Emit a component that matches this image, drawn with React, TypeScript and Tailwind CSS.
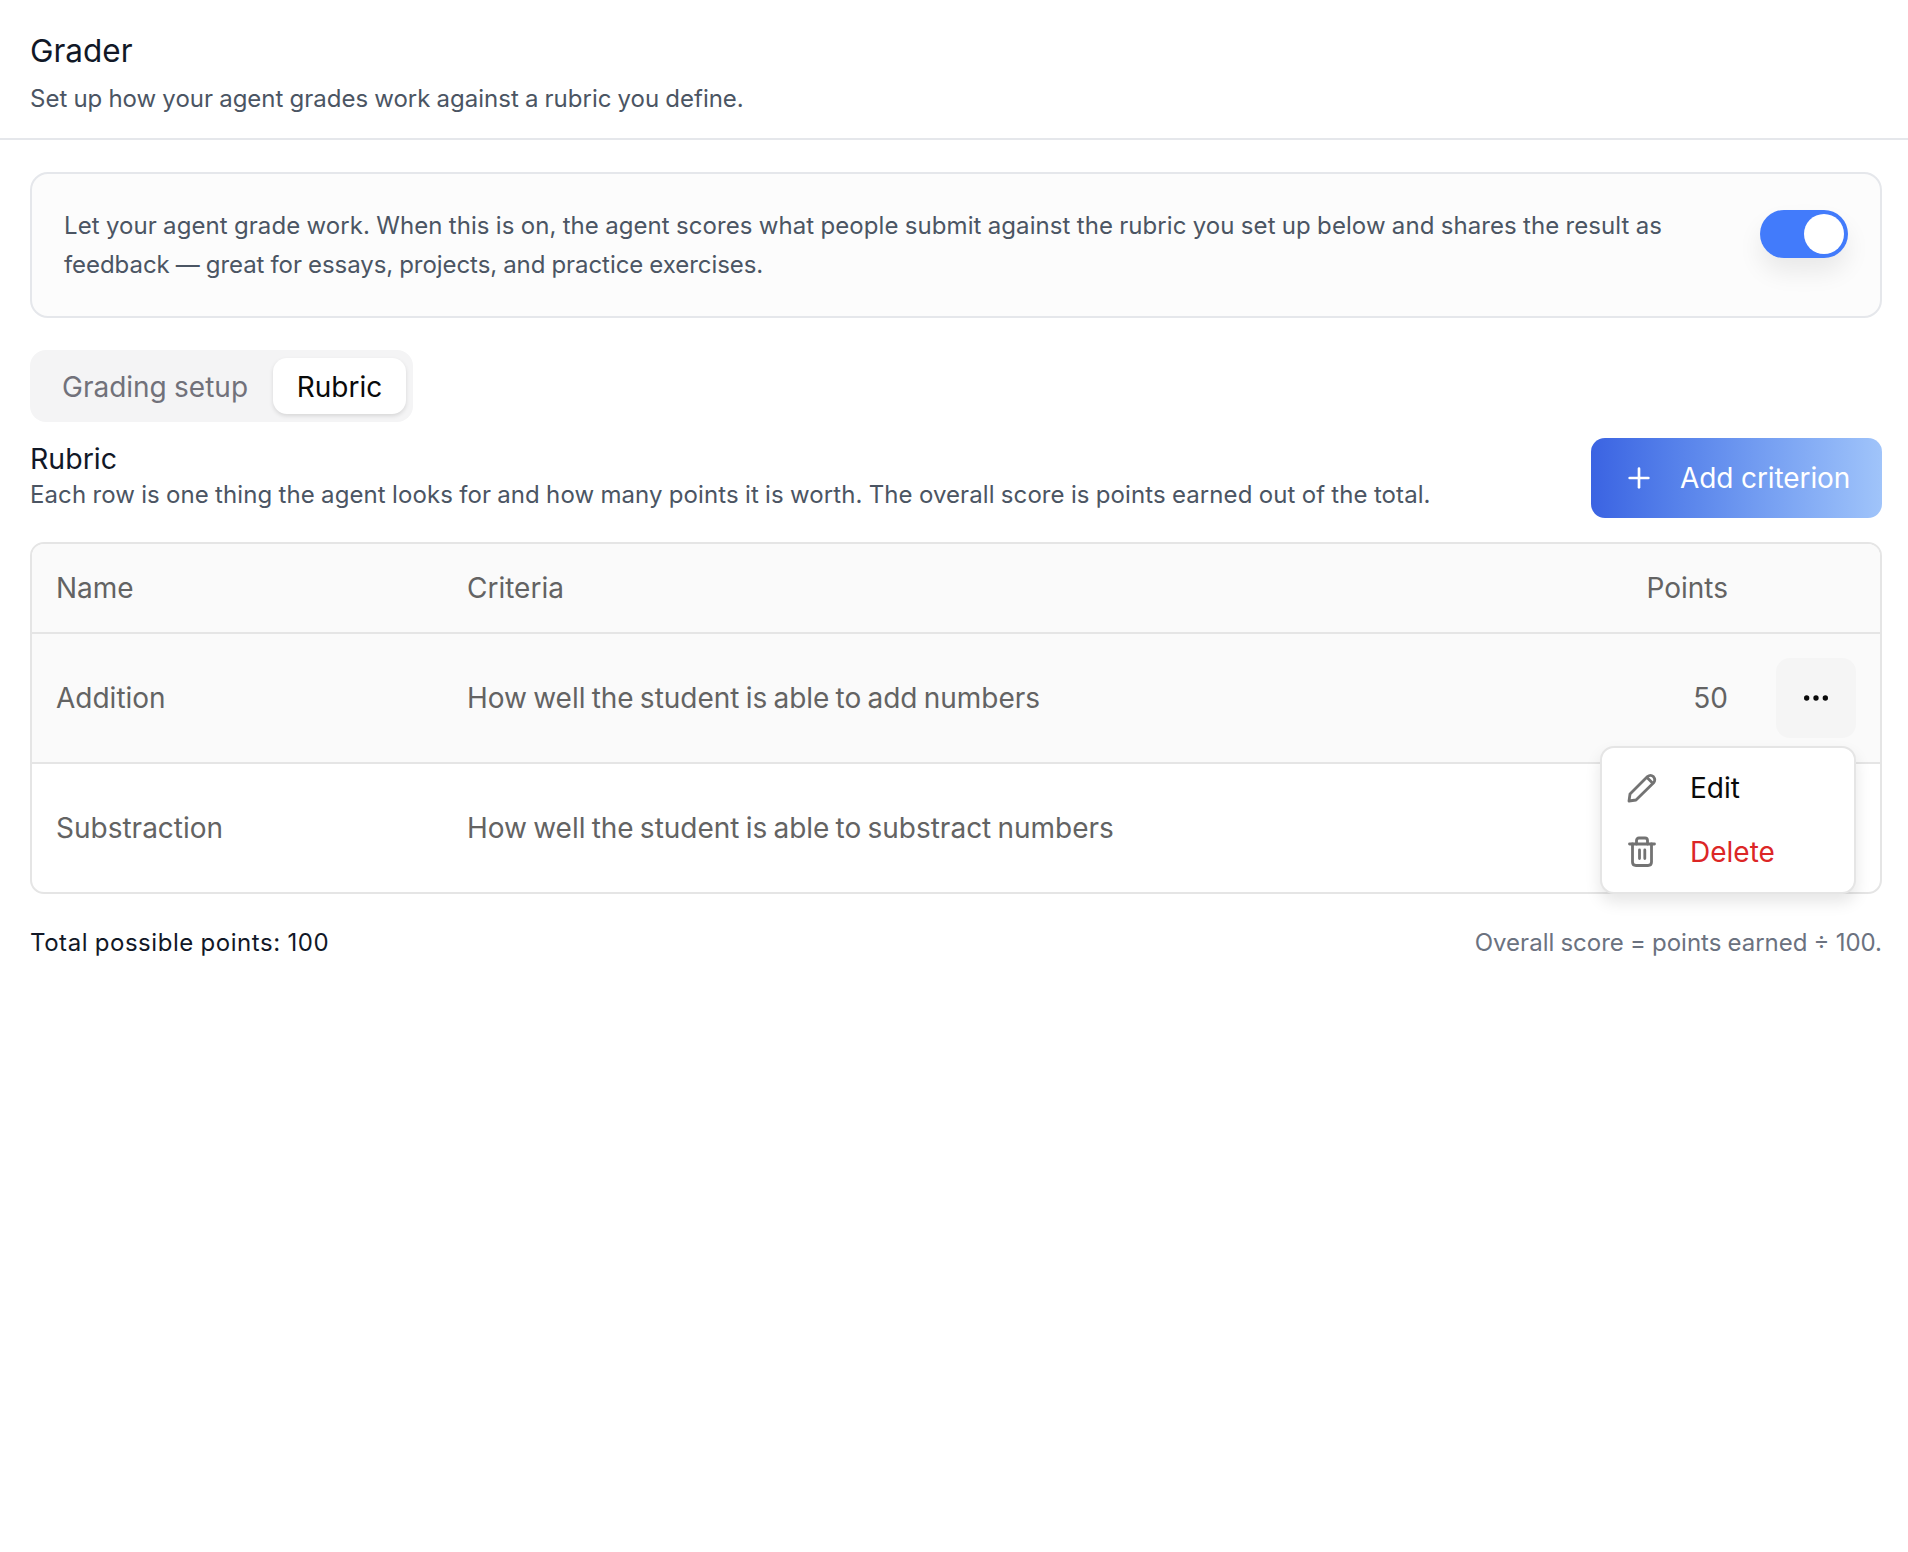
import { MoreHorizontal, Plus } from "lucide-react";

const rows = [
  { name: "Addition", criteria: "How well the student is able to add numbers", points: 50 },
  { name: "Substraction", criteria: "How well the student is able to substract numbers", points: 50 },
];

const EditIcon = () => (
  <svg width="30" height="30" viewBox="0 0 30 30" fill="none" stroke="#737373" strokeWidth="2.8" strokeLinecap="round" strokeLinejoin="round">
    <path d="M2 28 L3 21 L20.5 3.6 Q23.5 1.2 26.4 3.6 Q29 6.8 26.6 9.8 L9 27 Z" />
    <path d="M20.5 5 L25.5 10" />
  </svg>
);

const DeleteIcon = () => (
  <svg width="30" height="34" viewBox="0 0 30 34" fill="none" stroke="#737373" strokeWidth="2.8" strokeLinecap="round" strokeLinejoin="round">
    <path d="M2.5 9 H27.5" />
    <path d="M9.5 9 V5.5 Q9.5 3 12 3 H18 Q20.5 3 20.5 5.5 V9" />
    <path d="M5.5 9 L5.5 27 Q5.5 30.5 9 30.5 H21 Q24.5 30.5 24.5 27 V9" />
    <path d="M12.5 15 V23.5 M17.8 15 V23.5" />
  </svg>
);

const RowMenu = () => (
  <div className="absolute right-[24px] top-[112px] z-10 w-[256px] h-[148px] flex flex-col justify-center rounded-[14px] border-2 border-[#e5e5e5] bg-white shadow-[0_8px_16px_rgba(0,0,0,0.1)] text-[28px]">
    <div className="flex items-center h-[64px] pl-[25px] text-[#0a0a0a]">
      <span className="mr-[33px]">
        <EditIcon />
      </span>
      Edit
    </div>
    <div className="flex items-center h-[64px] pl-[25px] text-[#dc2626]">
      <span className="mr-[33px]">
        <DeleteIcon />
      </span>
      Delete
    </div>
  </div>
);

export default function App() {
  return (
    <div className="min-h-[1552px] bg-white font-['Inter',sans-serif] text-[24px] [word-spacing:-0.6px] antialiased">
      <div className="h-[140px] border-b-2 border-[#e5e7eb] pl-[30px] pt-[30px]">
        <h1 className="text-[31.5px] leading-[42px] font-normal text-[#111827]">Grader</h1>
        <p className="mt-[9px] leading-[36px] text-[#4b5563]">
          Set up how your agent grades work against a rubric you define.
        </p>
      </div>

      <div className="pl-[30px] pr-[26px] pt-[32px]">
        <div className="flex items-center justify-between h-[146px] rounded-[18px] border-2 border-[#e5e7eb] bg-[#fcfcfc] pl-[32px] pr-[32px]">
          <p className="w-[1640px] leading-[39px] tracking-[0.08px] text-[#4b5563]">
            Let your agent grade work. When this is on, the agent scores what people submit against the rubric you set up below and shares the result as{" "}
            <span className="tracking-[-0.06px]">feedback — great for essays, projects, and practice exercises.</span>
          </p>
          <div className="flex items-center justify-end w-[88px] h-[48px] mb-[22px] rounded-full bg-[#427bfb] pr-[4px] shadow-[0_14px_24px_rgba(0,0,0,0.08)]">
            <div className="w-[40px] h-[40px] rounded-full bg-white" />
          </div>
        </div>

        <div className="mt-[32px] inline-flex items-center h-[72px] rounded-[16px] bg-[#f4f4f5] pl-[32px] pr-[7px] text-[28px]">
          <span className="pt-[1px] text-[#71717a] mr-[25px]">Grading setup</span>
          <span className="flex items-center justify-center w-[133px] h-[56px] pt-[1px] rounded-[14px] bg-white text-[#0a0a0a] shadow-[0_2px_4px_rgba(0,0,0,0.12)]">
            Rubric
          </span>
        </div>

        <div className="flex items-center justify-between mt-[16px]">
          <div className="pb-[2px]">
            <h2 className="text-[28.5px] leading-[36px] font-normal text-[#111827]">Rubric</h2>
            <p className="leading-[36px] tracking-[0.09px] text-[#4b5563]">
              Each row is one thing the agent looks for and how many points it is worth. The overall score is points earned out of the total.
            </p>
          </div>
          <button className="flex items-center w-[291px] h-[80px] rounded-[14px] bg-gradient-to-r from-[#3b63e2] to-[#a0c4fa] pl-[32px] text-[28px] tracking-[-0.1px] text-white">
            <Plus size={32} strokeWidth={2} className="mr-[25px]" />
            Add criterion
          </button>
        </div>

        <div className="mt-[24px] rounded-[14px] border-2 border-[#e5e5e5] text-[28px] [word-spacing:-1.7px] text-[#636363]">
          <div className="flex items-center h-[90px] rounded-t-[12px] bg-[#fafafa] border-b-2 border-[#e5e5e5] pl-[24px] pr-[152px]">
            <span className="w-[411px]">Name</span>
            <span className="flex-1">Criteria</span>
            <span>Points</span>
          </div>
          {rows.map((row, index) => (
            <div
              key={row.name}
              className={
                index === 0
                  ? "relative flex items-center h-[130px] bg-[#fafafa] border-b-2 border-[#e5e5e5] pl-[24px] pr-[24px]"
                  : "flex items-center h-[128px] rounded-b-[12px] pl-[24px] pr-[24px]"
              }
            >
              <span className="w-[411px]">{row.name}</span>
              <span className="flex-1">{row.criteria}</span>
              {/* second row's points sit under the open menu */}
              {index === 0 ? (
                <>
                  <span>{row.points}</span>
                  <div className="flex items-center justify-center ml-[48px] w-[80px] h-[80px] rounded-[14px] bg-[#f5f5f5]">
                    <MoreHorizontal size={32} strokeWidth={2} className="text-[#0a0a0a]" />
                  </div>
                  <RowMenu />
                </>
              ) : null}
            </div>
          ))}
        </div>

        <div className="flex items-center justify-between mt-[31px] leading-[36px]">
          <span className="tracking-[0.55px] text-[#111827]">Total possible points: 100</span>
          <span className="text-[#6b7280]">Overall score = points earned ÷ 100.</span>
        </div>
      </div>
    </div>
  );
}
